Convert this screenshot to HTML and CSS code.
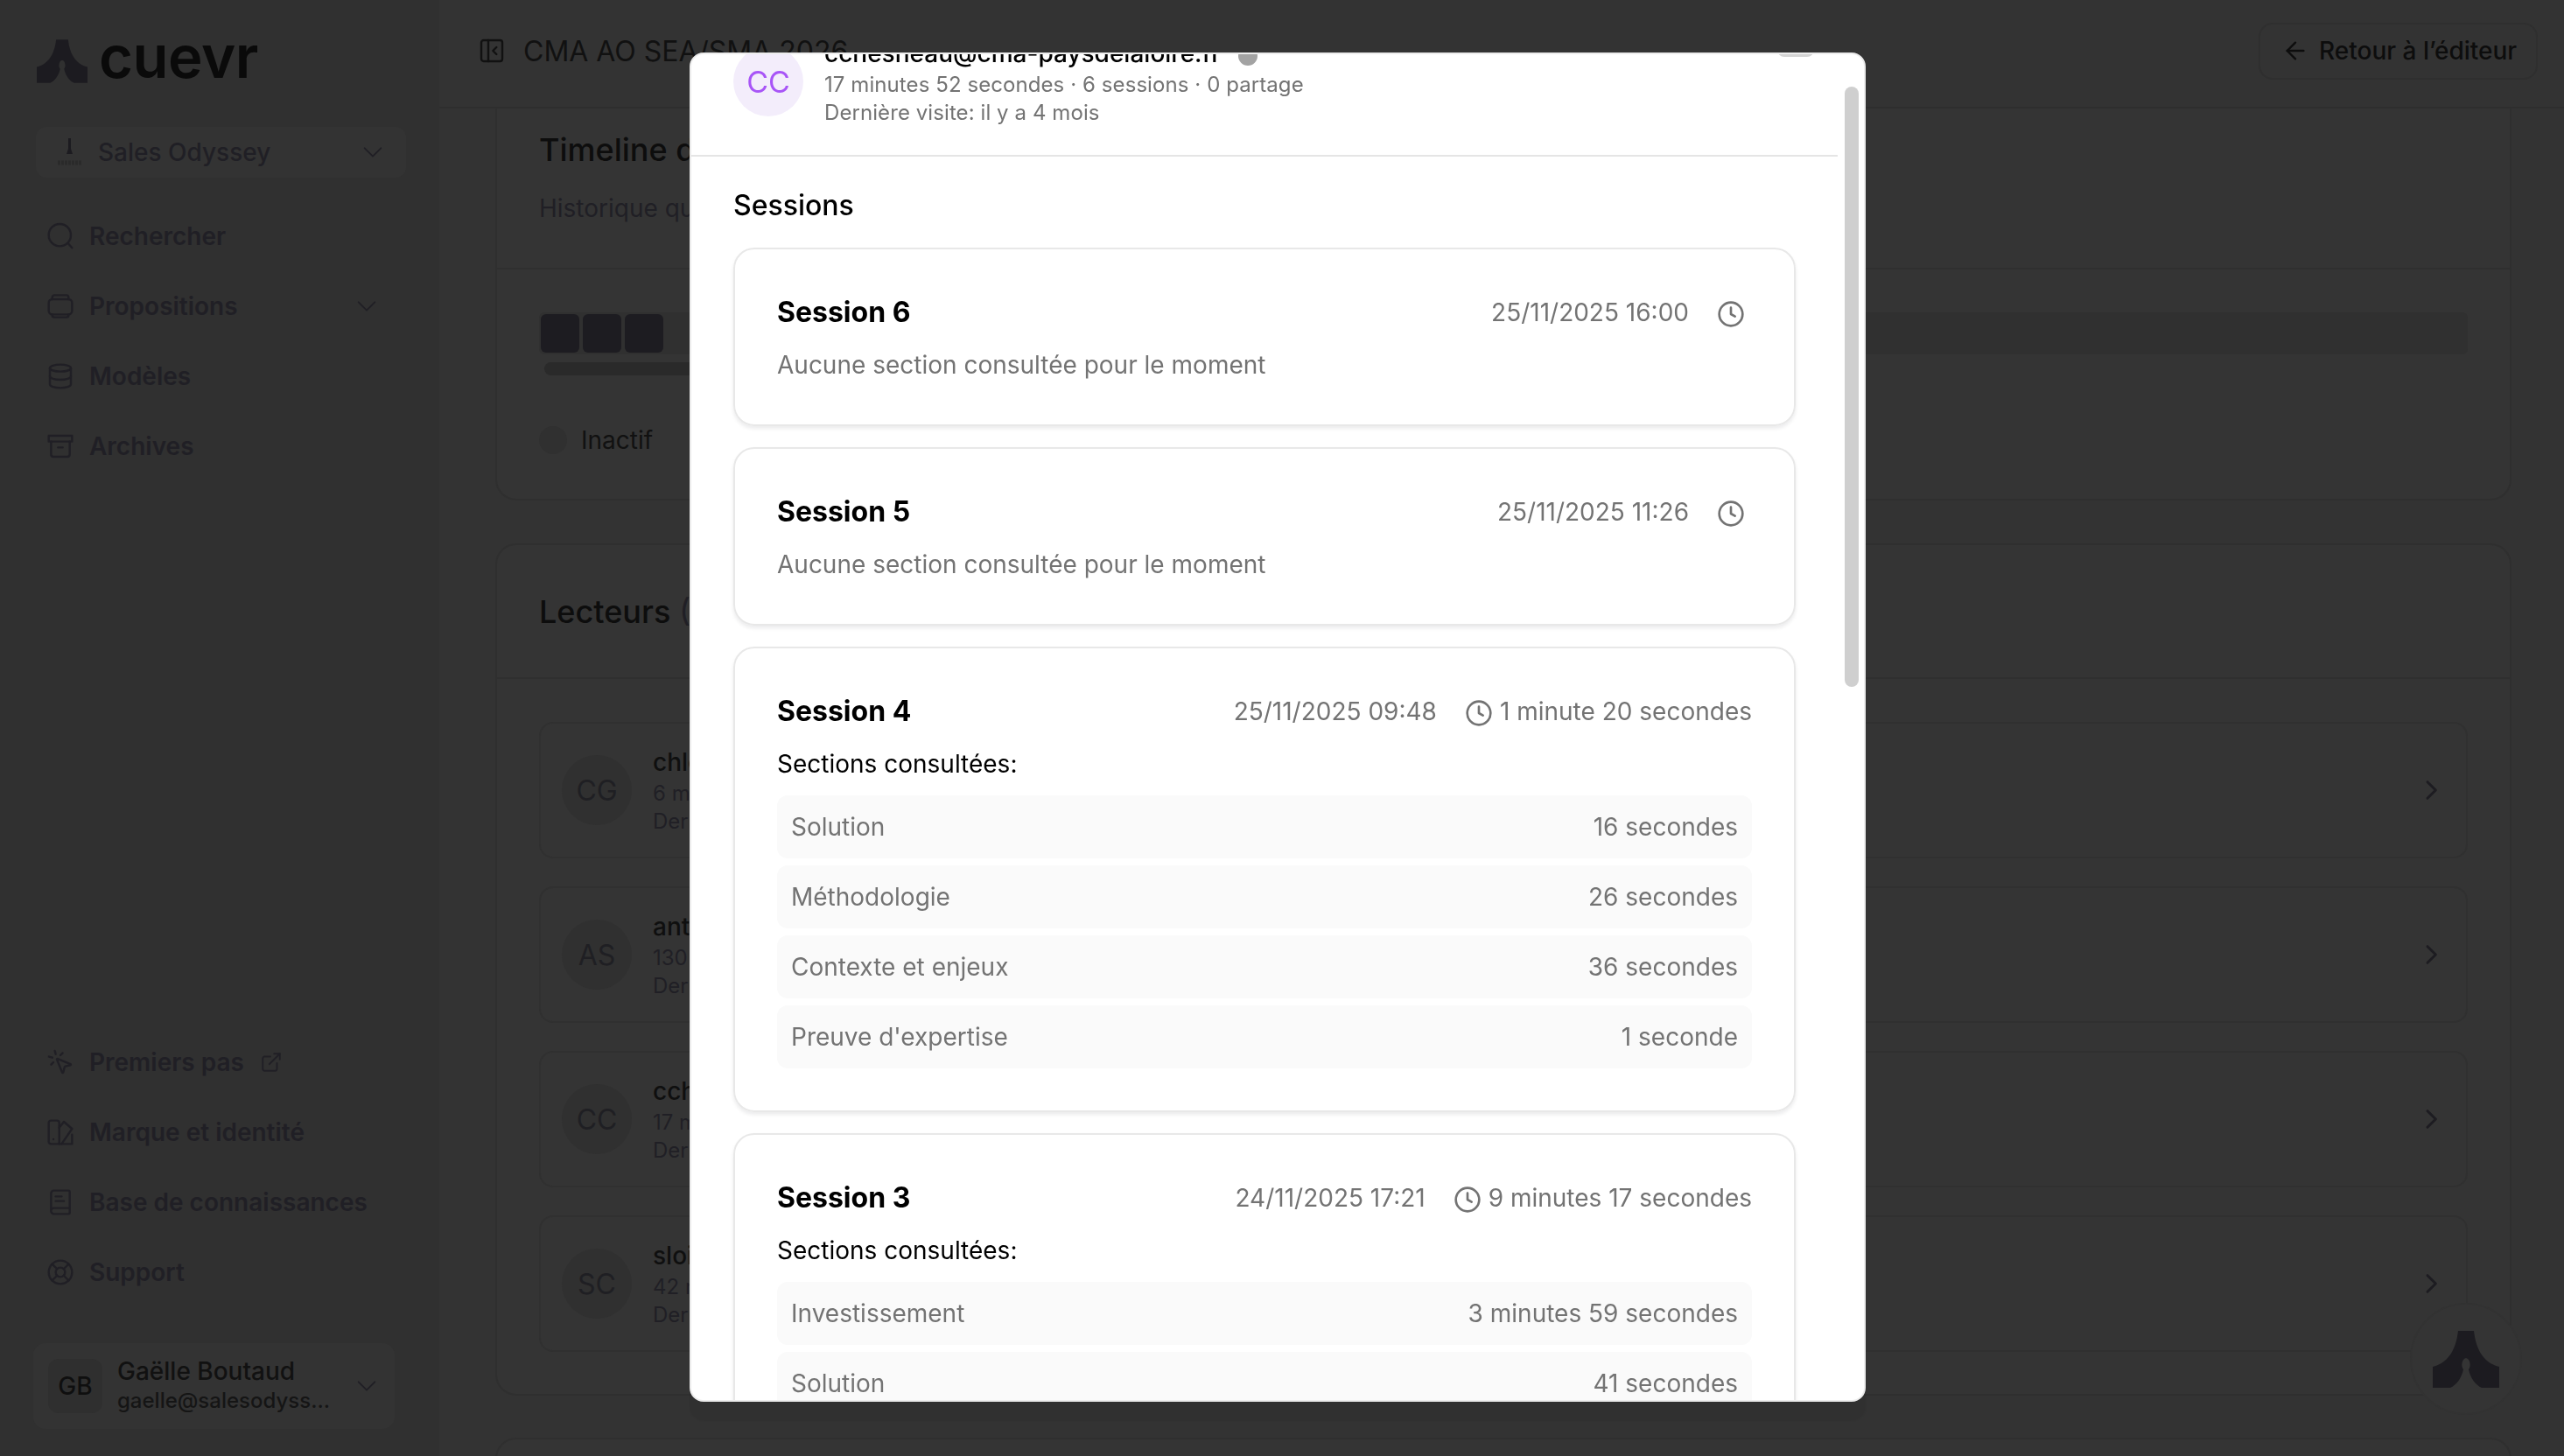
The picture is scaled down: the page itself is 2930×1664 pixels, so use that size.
FILE: index.html
```html
<!DOCTYPE html>
<html lang="fr">
<head>
    <meta charset="UTF-8">
    <meta name="viewport" content="width=device-width, initial-scale=1.0">
    <title>Cuevr - Statistiques</title>
    <link rel="stylesheet" href="styles.css">
</head>
<body>
    <svg class="sprite" width="0" height="0">
        <symbol id="logo-mark" viewBox="0 0 76 65">
            <path d="M29 0H47C49 18 56 36 76 41V65H56C49 62 43 54 41 44C44 41 43 32 38 31C33 32 32 41 35 44C33 54 27 62 20 65H0V41C20 36 27 18 29 0Z"/>
        </symbol>
        <symbol id="chevron-down" viewBox="0 0 24 24"><path d="m4 8 8 8 8-8"/></symbol>
        <symbol id="chevron-right" viewBox="0 0 24 24"><path d="m9 5 7 7-7 7"/></symbol>
        <symbol id="clock" viewBox="0 0 24 24"><circle cx="12" cy="12" r="10"/><path d="M12 6.5V12l3.5 2"/></symbol>
    </svg>

    <div class="app">
        <!-- barre laterale -->
        <aside class="sidebar">
            <div class="brand">
                <svg class="brand-mark"><use href="#logo-mark"/></svg>
                <span class="brand-name">cuevr</span>
            </div>

            <div class="workspace">
                <svg class="workspace-icon" viewBox="0 0 30 32">
                    <path d="M13 0h3v12l2 6H11l2-6z"/>
                    <path class="workspace-dash" d="M1 28h28"/>
                </svg>
                <span class="workspace-name">Sales Odyssey</span>
                <svg class="icon chevron"><use href="#chevron-down"/></svg>
            </div>

            <nav class="nav">
                <a class="nav-item">
                    <svg class="icon" viewBox="0 0 24 24"><circle cx="11.5" cy="11" r="9.5"/><path d="m18.5 18 3.5 4"/></svg>
                    Rechercher
                </a>
                <a class="nav-item">
                    <svg class="icon" viewBox="0 0 24 24"><rect x="2" y="6" width="20" height="13" rx="3"/><path d="M5 6V4.500A2 2 0 0 1 7 2.500h10a2 2 0 0 1 2 2V6M5 19v.5a2 2 0 0 0 2 2h10a2 2 0 0 0 2-2V19"/></svg>
                    Propositions
                    <svg class="icon chevron nav-chevron"><use href="#chevron-down"/></svg>
                </a>
                <a class="nav-item">
                    <svg class="icon" viewBox="0 0 24 24"><ellipse cx="12" cy="5" rx="9" ry="3"/><path d="M3 5v14c0 1.700 4 3 9 3s9-1.300 9-3V5"/><path d="M3 12c0 1.700 4 3 9 3s9-1.300 9-3"/></svg>
                    Modèles
                </a>
                <a class="nav-item">
                    <svg class="icon" viewBox="0 0 24 24"><path d="M2 3h20v5H2z"/><path d="M4 8v11a2 2 0 0 0 2 2h12a2 2 0 0 0 2-2V8"/><path d="M10 13h4"/></svg>
                    Archives
                </a>
            </nav>

            <nav class="nav nav-bottom">
                <a class="nav-item">
                    <svg class="icon" viewBox="0 0 24 24"><path d="M14 4.100 12 6"/><path d="m5.100 8-2.900-.8"/><path d="m6 12-1.900 2"/><path d="M7.200 2.200 8 5.100"/><path d="M9.037 9.690a.498.498 0 0 1 .653-.653l11 4.500a.5.5 0 0 1-.074.949l-4.349 1.041a1 1 0 0 0-.74.739l-1.040 4.350a.5.5 0 0 1-.95.074z"/></svg>
                    Premiers pas
                    <svg class="icon icon-small" viewBox="0 0 24 24"><path d="M15 3h6v6"/><path d="M10 14 21 3"/><path d="M18 13v6a2 2 0 0 1-2 2H5a2 2 0 0 1-2-2V8a2 2 0 0 1 2-2h6"/></svg>
                </a>
                <a class="nav-item">
                    <svg class="icon" viewBox="0 0 24 24"><path d="M11 22H4a2 2 0 0 1-2-2V4a2 2 0 0 1 2-2h5a2 2 0 0 1 2 2z"/><path d="m11 8 4-5 7 6-9 13"/><path d="M22 14v8H11"/><path d="M6 18h.01"/></svg>
                    Marque et identité
                </a>
                <a class="nav-item">
                    <svg class="icon" viewBox="0 0 24 24"><path d="M4 19.500v-15A2.500 2.500 0 0 1 6.500 2H19a1 1 0 0 1 1 1v18a1 1 0 0 1-1 1H6.500a2.500 2.500 0 0 1 0-5H20"/><path d="M8 11h7"/><path d="M8 7h5"/></svg>
                    Base de connaissances
                </a>
                <a class="nav-item">
                    <svg class="icon" viewBox="0 0 24 24"><circle cx="12" cy="12" r="10"/><circle cx="12" cy="12" r="4"/><path d="m4.930 4.930 4.240 4.240M14.830 9.170l4.240-4.240M14.830 14.830l4.240 4.240M9.170 14.830l-4.240 4.240"/></svg>
                    Support
                </a>
            </nav>

            <div class="user">
                <div class="user-avatar">GB</div>
                <div class="user-info">
                    <div class="user-name">Gaëlle Boutaud</div>
                    <div class="user-email">gaelle@salesodyss...</div>
                </div>
                <svg class="icon chevron user-chevron"><use href="#chevron-down"/></svg>
            </div>
        </aside>

        <!-- contenu principal -->
        <main class="main">
            <header class="topbar">
                <svg class="icon topbar-toggle" viewBox="0 0 24 24"><rect x="3" y="3" width="18" height="18" rx="2"/><path d="M9 3v18"/><path d="m16 15-3-3 3-3"/></svg>
                <h1 class="doc-title">CMA AO SEA/SMA 2026</h1>
                <button class="back-button">
                    <svg class="icon icon-arrow" viewBox="0 0 24 24"><path d="m12 19-7-7 7-7"/><path d="M19 12H5"/></svg>
                    Retour à l’éditeur
                </button>
            </header>

            <div class="content">
                <section class="panel panel-timeline">
                    <div class="panel-head panel-head-timeline">
                        <h2 class="panel-title">Timeline de consultation</h2>
                        <p class="panel-sub">Historique que chaque lecteur a parcouru</p>
                    </div>
                    <div class="panel-body timeline-body">
                        <div class="timeline-track">
                            <span class="timeline-cell"></span>
                            <span class="timeline-cell"></span>
                            <span class="timeline-cell"></span>
                        </div>
                        <div class="timeline-bar"></div>
                        <div class="legend">
                            <span class="legend-dot"></span>
                            Inactif
                        </div>
                    </div>
                </section>

                <section class="panel">
                    <div class="panel-head panel-head-readers">
                        <h2 class="panel-title">Lecteurs <span class="panel-count">(4)</span></h2>
                    </div>
                    <div class="panel-body readers">
                        <div class="reader">
                            <div class="reader-avatar">CG</div>
                            <div class="reader-info">
                                <div class="reader-name">chloe.g@cma-paysdelaloire.fr</div>
                                <div class="reader-meta">6 minutes 12 secondes</div>
                                <div class="reader-meta">Dernière visite: il y a 4 mois</div>
                            </div>
                            <svg class="icon reader-chevron"><use href="#chevron-right"/></svg>
                        </div>
                        <div class="reader">
                            <div class="reader-avatar">AS</div>
                            <div class="reader-info">
                                <div class="reader-name">antoine.s@cma-paysdelaloire.fr</div>
                                <div class="reader-meta">130 minutes 8 secondes</div>
                                <div class="reader-meta">Dernière visite: il y a 4 mois</div>
                            </div>
                            <svg class="icon reader-chevron"><use href="#chevron-right"/></svg>
                        </div>
                        <div class="reader">
                            <div class="reader-avatar">CC</div>
                            <div class="reader-info">
                                <div class="reader-name">cchesneau@cma-paysdelaloire.fr</div>
                                <div class="reader-meta">17 minutes 52 secondes</div>
                                <div class="reader-meta">Dernière visite: il y a 4 mois</div>
                            </div>
                            <svg class="icon reader-chevron"><use href="#chevron-right"/></svg>
                        </div>
                        <div class="reader">
                            <div class="reader-avatar">SC</div>
                            <div class="reader-info">
                                <div class="reader-name">sloi.c@cma-paysdelaloire.fr</div>
                                <div class="reader-meta">42 minutes 3 secondes</div>
                                <div class="reader-meta">Dernière visite: il y a 4 mois</div>
                            </div>
                            <svg class="icon reader-chevron"><use href="#chevron-right"/></svg>
                        </div>
                    </div>
                </section>

                <section class="panel panel-last"></section>
            </div>
        </main>
    </div>

    <button class="help-bubble">
        <svg class="help-mark"><use href="#logo-mark"/></svg>
    </button>

    <!-- fenetre du lecteur -->
    <div class="modal">
        <div class="modal-scroll">
            <div class="modal-head">
                <div class="modal-avatar">CC</div>
                <div class="modal-info">
                    <div class="modal-email">cchesneau@cma-paysdelaloire.fr <span class="status-dot"></span></div>
                    <div class="modal-meta">17 minutes 52 secondes · 6 sessions · 0 partage</div>
                    <div class="modal-meta">Dernière visite: il y a 4 mois</div>
                </div>
                <span class="modal-close"></span>
            </div>

            <div class="modal-body">
                <h3 class="sessions-title">Sessions</h3>

                <article class="session">
                    <div class="session-head">
                        <span class="session-name">Session 6</span>
                        <div class="session-meta">
                            <span>25/11/2025 16:00</span>
                            <span class="session-duration"><svg class="clock"><use href="#clock"/></svg><span></span></span>
                        </div>
                    </div>
                    <p class="session-empty">Aucune section consultée pour le moment</p>
                </article>

                <article class="session">
                    <div class="session-head">
                        <span class="session-name">Session 5</span>
                        <div class="session-meta">
                            <span>25/11/2025 11:26</span>
                            <span class="session-duration"><svg class="clock"><use href="#clock"/></svg><span></span></span>
                        </div>
                    </div>
                    <p class="session-empty">Aucune section consultée pour le moment</p>
                </article>

                <article class="session">
                    <div class="session-head">
                        <span class="session-name">Session 4</span>
                        <div class="session-meta">
                            <span>25/11/2025 09:48</span>
                            <span class="session-duration"><svg class="clock"><use href="#clock"/></svg><span>1 minute 20 secondes</span></span>
                        </div>
                    </div>
                    <p class="sections-label">Sections consultées:</p>
                    <ul class="section-list">
                        <li class="section-row"><span>Solution</span><span>16 secondes</span></li>
                        <li class="section-row"><span>Méthodologie</span><span>26 secondes</span></li>
                        <li class="section-row"><span>Contexte et enjeux</span><span>36 secondes</span></li>
                        <li class="section-row"><span>Preuve d'expertise</span><span>1 seconde</span></li>
                    </ul>
                </article>

                <article class="session">
                    <div class="session-head">
                        <span class="session-name">Session 3</span>
                        <div class="session-meta">
                            <span>24/11/2025 17:21</span>
                            <span class="session-duration"><svg class="clock"><use href="#clock"/></svg><span>9 minutes 17 secondes</span></span>
                        </div>
                    </div>
                    <p class="sections-label">Sections consultées:</p>
                    <ul class="section-list">
                        <li class="section-row"><span>Investissement</span><span>3 minutes 59 secondes</span></li>
                        <li class="section-row"><span>Solution</span><span>41 secondes</span></li>
                    </ul>
                </article>
            </div>
        </div>
        <div class="scrollbar"><div class="scrollbar-thumb"></div></div>
    </div>
</body>
</html>
```

FILE: styles.css
```css
* {
    box-sizing: border-box;
}

html,
body {
    margin: 0;
    height: 100%;
}

body {
    font-family: 'Inter', 'Liberation Sans', sans-serif;
    font-size: 28px;
    background-color: #333333;
    color: #111111;
    overflow: hidden;
}

.sprite {
    display: block;
    height: 0;
}

.app {
    display: flex;
    height: 1664px;
}

/* icones */
.icon {
    width: 32px;
    height: 32px;
    flex-shrink: 0;
    fill: none;
    stroke: #201f25;
    stroke-width: 1.8;
    stroke-linecap: round;
    stroke-linejoin: round;
}

.icon-small {
    width: 26px;
    height: 26px;
    margin-left: 1px;
}

.chevron {
    width: 28px;
    height: 28px;
    stroke-width: 1.6;
}

/* barre laterale */
.sidebar {
    width: 502px;
    flex-shrink: 0;
    display: flex;
    flex-direction: column;
    background-color: #303030;
    padding: 45px 38px 31px 38px;
}

.brand {
    display: flex;
    align-items: center;
    gap: 13px;
    height: 50px;
    padding-left: 4px;
}

.brand-mark {
    width: 58px;
    height: 50px;
    fill: #1c1b20;
}

.brand-name {
    font-size: 67px;
    font-weight: 600;
    letter-spacing: -0.5px;
    line-height: 50px;
    color: #0a0a0a;
    margin-top: -10px;
}

.workspace {
    display: flex;
    align-items: center;
    width: 423px;
    height: 58px;
    margin: 50px 0 0 3px;
    padding: 0 24px 0 24px;
    border-radius: 12px;
    background-color: #333333;
}

.workspace-icon {
    width: 30px;
    height: 32px;
    flex-shrink: 0;
    fill: #1c1b20;
    margin-right: 17px;
}

.workspace-dash {
    fill: none;
    stroke: #2a2a2a;
    stroke-width: 5;
    stroke-dasharray: 3 1;
}

.workspace-name {
    flex: 1;
    font-weight: 500;
    color: #201f25;
}

.nav {
    display: flex;
    flex-direction: column;
    margin-top: 27px;
    padding-left: 15px;
}

.nav-bottom {
    margin-top: auto;
    margin-bottom: 41px;
}

.nav-item {
    display: flex;
    align-items: center;
    gap: 17px;
    height: 80px;
    font-weight: 600;
    color: #201f25;
    white-space: nowrap;
}

.nav-chevron {
    margin-left: auto;
    margin-right: 31px;
}

.user {
    display: flex;
    align-items: center;
    width: 413px;
    height: 98px;
    padding: 0 18px 0 17px;
    border-radius: 14px;
    background-color: #333333;
}

.user-avatar {
    width: 62px;
    height: 62px;
    flex-shrink: 0;
    display: flex;
    align-items: center;
    justify-content: center;
    border-radius: 12px;
    background-color: #2f2f2f;
    font-weight: 500;
    color: #0f0f0f;
}

.user-info {
    flex: 1;
    margin-left: 17px;
    min-width: 0;
}

.user-name {
    font-weight: 500;
    line-height: 34px;
    color: #111111;
}

.user-email {
    font-size: 24px;
    font-weight: 500;
    line-height: 34px;
    color: #151515;
}

/* zone principale */
.main {
    flex: 1;
    min-width: 0;
    display: flex;
    flex-direction: column;
}

.topbar {
    height: 124px;
    flex-shrink: 0;
    display: flex;
    align-items: center;
    padding: 0 30px 6px 44px;
    border-bottom: 2px solid #2e2e2e;
}

.topbar-toggle {
    stroke: #111111;
}

.doc-title {
    flex: 1;
    margin: 0 0 0 20px;
    font-size: 32px;
    font-weight: 400;
    color: #111111;
}

.back-button {
    display: flex;
    align-items: center;
    gap: 11px;
    width: 319px;
    height: 65px;
    padding: 0 0 0 24px;
    border: 2px solid #2f2f2f;
    border-radius: 16px;
    background: transparent;
    font-family: inherit;
    font-size: 28px;
    font-weight: 500;
    color: #0d0d0d;
}

.icon-arrow {
    stroke: #0d0d0d;
}

.content {
    flex: 1;
    overflow: hidden;
    display: flex;
    flex-direction: column;
    gap: 48px;
    padding: 0 60px 0 64px;
}

.panel {
    flex-shrink: 0;
    border: 2px solid #2f2f2f;
    border-radius: 24px;
    background-color: #343434;
}

.panel-timeline {
    margin-top: -23px;
    margin-bottom: 1px;
}

.panel-head {
    padding: 0 48px;
    border-bottom: 2px solid #2f2f2f;
}

.panel-head-timeline {
    height: 205px;
    padding-top: 46px;
}

.panel-head-readers {
    height: 153px;
    display: flex;
    align-items: center;
}

.panel-title {
    margin: 0;
    font-size: 36px;
    font-weight: 500;
    line-height: 44px;
    color: #0d0d0d;
}

.panel-count {
    color: #201f25;
    font-weight: 400;
}

.panel-sub {
    margin: 25px 0 0;
    font-size: 28px;
    line-height: 40px;
    color: #201f25;
}

.panel-body {
    padding: 48px;
}

.timeline-body {
    padding-top: 49px;
    padding-bottom: 50px;
}

.timeline-track {
    display: flex;
    height: 48px;
    padding: 2px;
    background-color: #303030;
    border-radius: 6px;
    gap: 4px;
}

.timeline-cell {
    width: 44px;
    height: 44px;
    border-radius: 6px;
    background-color: #1d1c21;
}

.timeline-bar {
    width: 320px;
    height: 15px;
    margin: 9px 0 0 6px;
    border-radius: 8px;
    background-color: #2a2a2a;
}

.legend {
    display: flex;
    align-items: center;
    gap: 16px;
    margin-top: 57px;
    color: #111111;
}

.legend-dot {
    width: 32px;
    height: 32px;
    border-radius: 50%;
    background-color: #303030;
}

.readers {
    display: flex;
    flex-direction: column;
    gap: 32px;
    padding-top: 49px;
}

.reader {
    display: flex;
    align-items: center;
    height: 156px;
    padding: 0 24px 0 24px;
    border: 2px solid #303030;
    border-radius: 16px;
}

.reader-avatar {
    width: 80px;
    height: 80px;
    flex-shrink: 0;
    display: flex;
    align-items: center;
    justify-content: center;
    border-radius: 50%;
    background-color: #303030;
    font-size: 32px;
    color: #1f1f23;
}

.reader-info {
    flex: 1;
    margin-left: 24px;
}

.reader-name {
    font-weight: 500;
    line-height: 40px;
    color: #0f0f0f;
}

.reader-meta {
    font-size: 24px;
    line-height: 32px;
    color: #201f25;
}

.reader-chevron {
    stroke: #1d1c21;
    stroke-width: 2.2;
}

.panel-last {
    height: 120px;
}

/* bulle d'aide */
.help-bubble {
    position: fixed;
    right: 48px;
    bottom: 47px;
    width: 128px;
    height: 128px;
    display: flex;
    align-items: center;
    justify-content: center;
    padding: 0;
    border: 2px solid #323232;
    border-radius: 50%;
    background-color: #343434;
}

.help-mark {
    width: 76px;
    height: 65px;
    fill: #1c1b20;
}

/* fenetre du lecteur */
.modal {
    position: fixed;
    left: 788px;
    top: 60px;
    width: 1344px;
    height: 1542px;
    display: flex;
    overflow: hidden;
    border: 2px solid #ececec;
    border-radius: 16px;
    background-color: #ffffff;
    box-shadow: 0 22px 2px rgba(0, 0, 0, 0.06);
    color: #000000;
}

.modal-scroll {
    width: 1310px;
    flex-shrink: 0;
    overflow: hidden;
}

.modal-head {
    position: relative;
    display: flex;
    align-items: center;
    gap: 24px;
    margin-top: -21px;
    padding: 0 48px 32px;
    border-bottom: 2px solid #e5e5e5;
}

.modal-avatar {
    width: 80px;
    height: 80px;
    flex-shrink: 0;
    display: flex;
    align-items: center;
    justify-content: center;
    border-radius: 50%;
    background-color: #f3edfb;
    font-size: 34px;
    color: #a855f7;
}

.modal-email {
    display: flex;
    align-items: center;
    gap: 20px;
    font-weight: 500;
    line-height: 40px;
}

.status-dot {
    width: 22px;
    height: 22px;
    border-radius: 50%;
    background-color: #a3a3a3;
    margin-top: 6px;
}

.modal-meta {
    font-size: 24px;
    line-height: 32px;
    letter-spacing: 0.08px;
    color: #737373;
}

.modal-close {
    position: absolute;
    right: 27px;
    top: 0;
    width: 42px;
    height: 24px;
    border-radius: 8px;
    background-color: #d4d4d4;
}

.modal-body {
    padding: 32px 48px 48px;
}

.sessions-title {
    margin: 0 0 24px;
    font-size: 32px;
    font-weight: 500;
    line-height: 48px;
}

.session {
    margin-bottom: 24px;
    padding: 48px;
    border: 2px solid #e8e8e8;
    border-radius: 24px;
    box-shadow: 0 3px 4px rgba(0, 0, 30, 0.08);
}

.session-head {
    display: flex;
    align-items: center;
    justify-content: space-between;
    height: 48px;
}

.session-name {
    font-size: 32px;
    font-weight: 700;
    margin-top: -2px;
}

.session-meta {
    display: flex;
    align-items: center;
    gap: 32px;
    color: #737373;
}

.session-duration {
    display: flex;
    align-items: center;
    gap: 8px;
}

.clock {
    width: 32px;
    height: 32px;
    margin-top: 3px;
    fill: none;
    stroke: #737373;
    stroke-width: 2;
    stroke-linecap: round;
    stroke-linejoin: round;
}

.session-empty {
    margin: 16px 0 0;
    line-height: 40px;
    color: #737373;
}

.sections-label {
    margin: 16px 0;
    line-height: 40px;
}

.section-list {
    display: flex;
    flex-direction: column;
    gap: 8px;
    margin: 0;
    padding: 0;
    list-style: none;
}

.section-row {
    display: flex;
    align-items: center;
    justify-content: space-between;
    height: 72px;
    padding: 0 16px;
    border-radius: 12px;
    background-color: #fafafa;
    color: #737373;
}

.scrollbar {
    flex: 1;
    padding: 37px 0 0 8px;
}

.scrollbar-thumb {
    width: 16px;
    height: 686px;
    border-radius: 8px;
    background-color: #cfcfcf;
}
```
